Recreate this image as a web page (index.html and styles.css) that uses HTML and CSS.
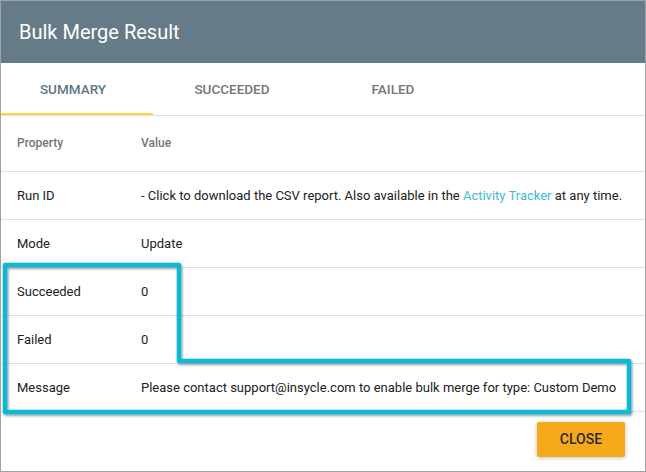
FILE: index.html
```html
<!DOCTYPE html>
<html>
<head>
<meta charset="utf-8">
<link rel="stylesheet" href="styles.css">
</head>
<body>
<div class="dialog">
  <div class="header">Bulk Merge Result</div>
  <div class="tabs">
    <div class="tab tab-summary active">SUMMARY</div>
    <div class="tab tab-succeeded">SUCCEEDED</div>
    <div class="tab tab-failed">FAILED</div>
  </div>
  <table class="summary">
    <thead>
      <tr class="head-row"><th class="col-prop">Property</th><th>Value</th></tr>
    </thead>
    <tbody>
      <tr><td class="col-prop">Run ID</td><td>- Click to download the CSV report. Also available in the <a class="link">Activity Tracker</a> at any time.</td></tr>
      <tr><td class="col-prop">Mode</td><td>Update</td></tr>
      <tr><td class="col-prop">Succeeded</td><td>0</td></tr>
      <tr><td class="col-prop">Failed</td><td>0</td></tr>
      <tr><td class="col-prop">Message</td><td>Please contact support@insycle.com to enable bulk merge for type: Custom Demo</td></tr>
    </tbody>
  </table>
  <div class="footer">
    <button class="close-btn">CLOSE</button>
  </div>
  <svg class="annotation" width="646" height="472" viewBox="0 0 646 472">
    <defs>
      <filter id="sh" x="-5%" y="-5%" width="110%" height="120%">
        <feDropShadow dx="1" dy="1.5" stdDeviation="0.8" flood-color="#000" flood-opacity="0.45"/>
      </filter>
    </defs>
    <path d="M5 265 H179 V361 H629 V412 H5 Z" fill="none" stroke="#0bbad3" stroke-width="4.5" stroke-linejoin="round" filter="url(#sh)"/>
  </svg>
</div>
</body>
</html>
```

FILE: styles.css
```css
* { box-sizing: border-box; }
html, body { margin: 0; padding: 0; background: #fff; }
body { font-family: Roboto, "Noto Sans", Arial, sans-serif; }

.dialog {
  position: relative;
  width: 646px;
  height: 472px;
  border: 1px solid #a2a2a2;
  background: #fff;
  overflow: hidden;
  display: flex;
  flex-direction: column;
}

.header {
  height: 62px;
  background: #657b88;
  color: #fff;
  font-size: 20px;
  line-height: 62px;
  padding-left: 18px;
  flex: none;
}

.tabs {
  display: flex;
  height: 53px;
  border-bottom: 1px solid #e0e0e0;
  flex: none;
}
.tab {
  height: 52px;
  line-height: 52px;
  font-size: 13.5px;
  font-weight: 500;
  color: #757575;
  text-align: center;
  border-bottom: 2px solid transparent;
}
.tab.active { color: #5f7683; border-bottom-color: #fdd835; }
.tab-summary { width: 152px; padding-right: 8px; }
.tab-succeeded { width: 158px; }
.tab-failed { width: 164px; }

.summary {
  width: 100%;
  border-collapse: collapse;
  flex: none;
}
.summary th, .summary td {
  text-align: left;
  padding: 0;
  border-bottom: 1px solid #e0e0e0;
}
.summary th {
  height: 55px;
  font-size: 12px;
  font-weight: 500;
  color: #757575;
}
.summary td {
  height: 48px;
  font-size: 13px;
  color: #212121;
}
.col-prop { width: 140px; padding-left: 16px !important; }
.link { color: #3fbcd6; text-decoration: none; }

.footer {
  display: flex;
  justify-content: flex-end;
  padding: 10px 20px 0 0;
}
.close-btn {
  width: 88px;
  height: 35px;
  border: none;
  border-radius: 2px;
  background: #f8a91b;
  color: #2a2a2a;
  font-family: Roboto, Arial, sans-serif;
  font-size: 14px;
  font-weight: 500;
  box-shadow: 0 1px 4px rgba(0,0,0,0.25);
}

.annotation {
  position: absolute;
  left: -1px;
  top: -1px;
  pointer-events: none;
}
```
